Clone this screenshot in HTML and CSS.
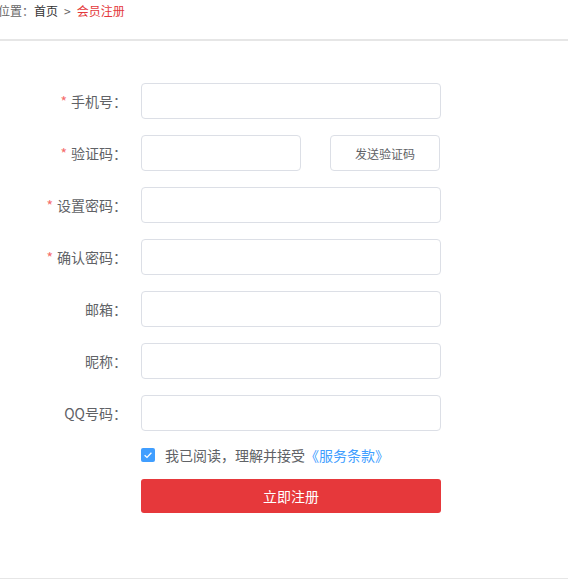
FILE: index.html
```html
<!DOCTYPE html>
<html lang="zh">
<head>
<meta charset="utf-8">
<title>会员注册</title>
<link rel="stylesheet" href="styles.css">
</head>
<body>
<div class="crumb"><span class="crumb-inner"><span class="muted">当前位置：</span><a class="home">首页</a><span class="sep">&gt;</span><span class="cur">会员注册</span></span></div>
<div class="main">
  <form class="form">
    <div class="row"><label class="label"><span class="req">*</span>手机号：</label><input class="input"></div>
    <div class="row"><label class="label"><span class="req">*</span>验证码：</label><input class="input short"><button type="button" class="send">发送验证码</button></div>
    <div class="row"><label class="label"><span class="req">*</span>设置密码：</label><input class="input" type="password"></div>
    <div class="row"><label class="label"><span class="req">*</span>确认密码：</label><input class="input" type="password"></div>
    <div class="row"><label class="label">邮箱：</label><input class="input"></div>
    <div class="row"><label class="label">昵称：</label><input class="input"></div>
    <div class="row"><label class="label">QQ号码：</label><input class="input"></div>
    <div class="agree">
      <span class="check"><svg width="14" height="14" viewBox="0 0 14 14"><path d="M3.6 7.2 L6 9.4 L10.4 4.8" fill="none" stroke="#fff" stroke-width="1.3"/></svg></span>
      <span class="agree-text">我已阅读，理解并接受<a class="link">《服务条款》</a></span>
    </div>
    <button type="button" class="submit">立即注册</button>
  </form>
</div>
</body>
</html>
```

FILE: styles.css
```css
html, body {
  margin: 0;
  padding: 0;
  background: #fff;
  font-family: "Microsoft YaHei", "Noto Sans CJK SC", "Noto Sans", sans-serif;
  color: #606266;
}
.crumb {
  height: 39px;
  border-bottom: 2px solid #e6e6e6;
  overflow: hidden;
  white-space: nowrap;
  font-size: 12px;
  line-height: 22px;
}
.crumb-inner {
  display: inline-block;
  margin-left: -26px;
}
.muted { color: #666; }
.home { color: #333; }
.sep { color: #666; margin: 0 6px; }
.cur { color: #e4393c; }
.main {
  border-bottom: 1px solid #e6e6e6;
  padding: 42px 0 65px;
}
.form { margin: 0; }
.row {
  display: flex;
  align-items: center;
  height: 36px;
  margin-bottom: 16px;
}
.label {
  width: 127px;
  padding-right: 14px;
  text-align: right;
  font-size: 14px;
  color: #606266;
  flex: none;
}
.req {
  color: #f56c6c;
  margin-right: 4px;
}
.input {
  box-sizing: border-box;
  width: 300px;
  height: 36px;
  border: 1px solid #dcdfe6;
  border-radius: 4px;
  padding: 0 12px;
  outline: none;
  font-size: 14px;
  margin: 0;
  flex: none;
}
.input.short { width: 160px; }
.send {
  box-sizing: border-box;
  margin-left: 29px;
  width: 110px;
  height: 36px;
  border: 1px solid #dcdfe6;
  border-radius: 4px;
  background: #fff;
  color: #606266;
  font-size: 12px;
  font-family: inherit;
  padding: 0;
}
.agree {
  display: flex;
  align-items: center;
  height: 16px;
  margin-left: 141px;
}
.check {
  width: 14px;
  height: 14px;
  border-radius: 2px;
  background: #409eff;
  display: block;
  flex: none;
}
.check svg { display: block; }
.agree-text {
  margin-left: 10px;
  font-size: 14px;
  line-height: 16px;
  color: #606266;
}
.link { color: #409eff; }
.submit {
  display: block;
  box-sizing: border-box;
  margin: 16px 0 0 141px;
  width: 300px;
  height: 34px;
  border: none;
  border-radius: 3px;
  background: #e6383b;
  color: #fff;
  font-size: 14px;
  font-family: inherit;
  padding: 0;
}
```
